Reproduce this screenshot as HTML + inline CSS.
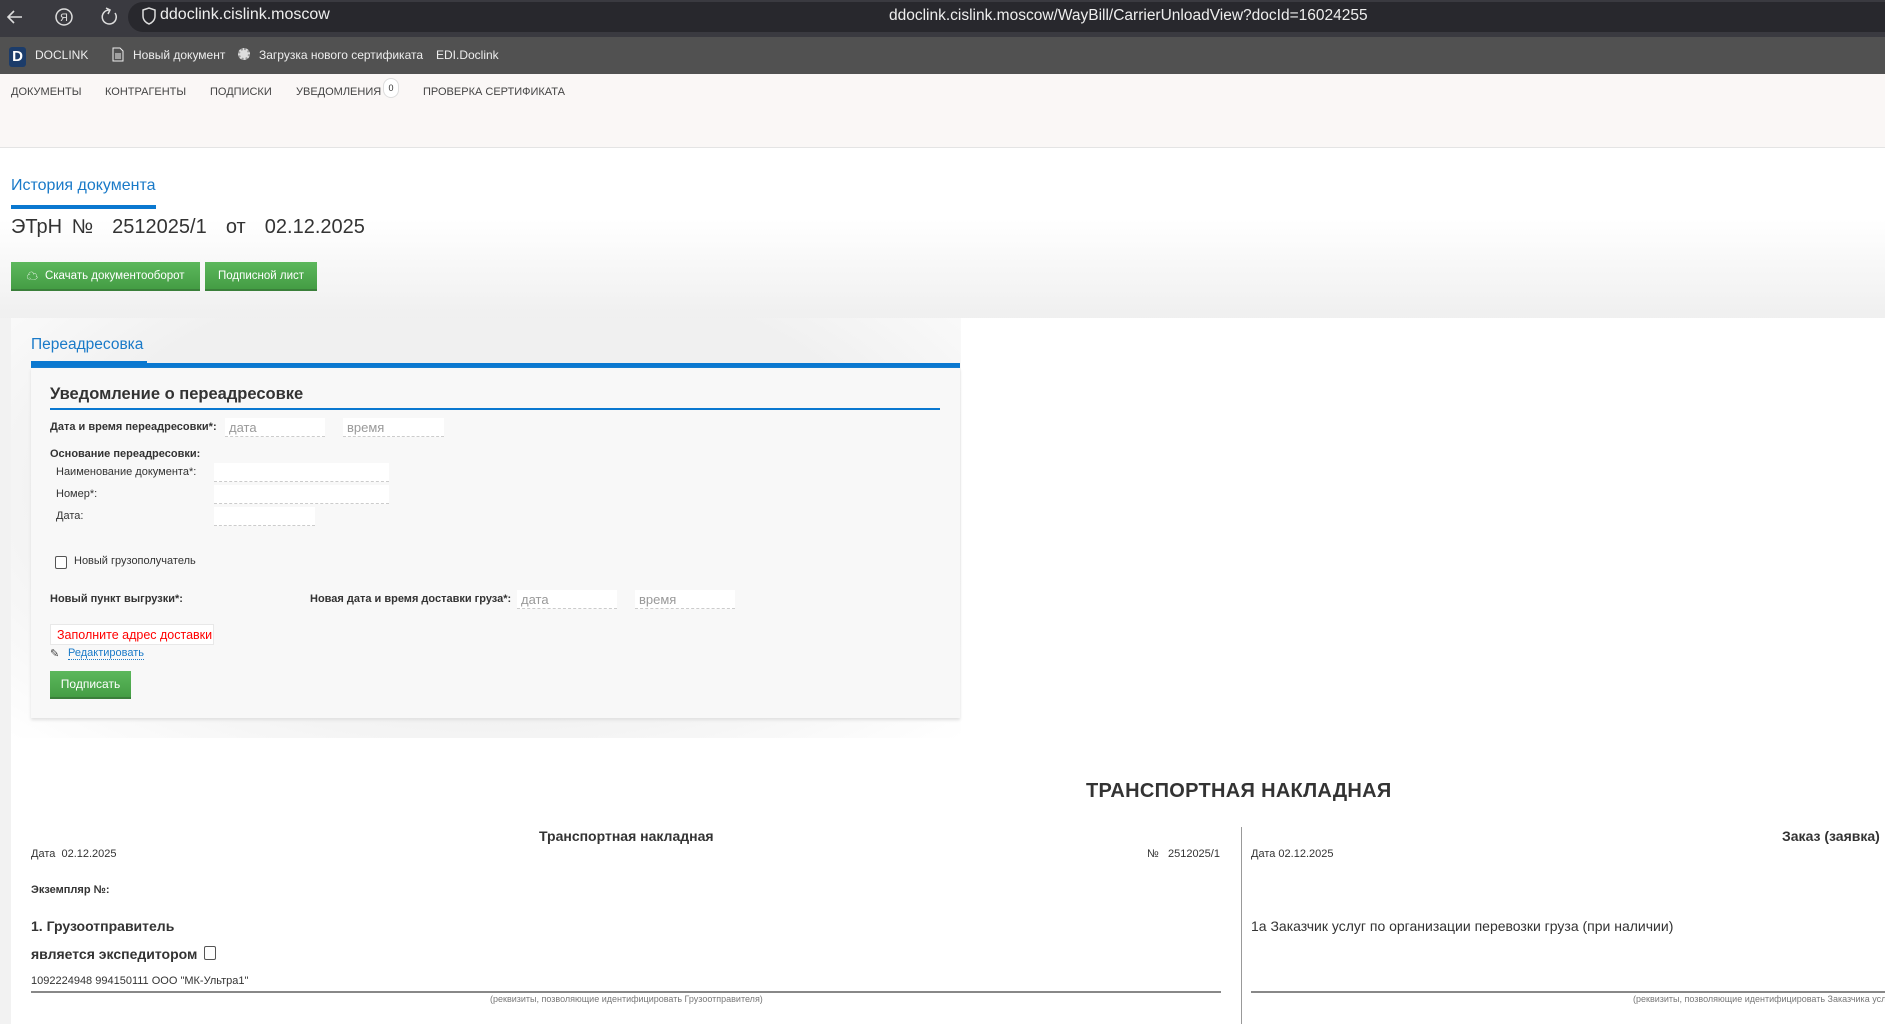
<!DOCTYPE html>
<html><head><meta charset="utf-8"><style>
*{margin:0;padding:0;box-sizing:border-box}
body{width:1885px;height:1024px;overflow:hidden;background:#fff;font-family:"Liberation Sans","Noto Sans CJK SC",sans-serif;color:#333;position:relative}
.a{position:absolute;white-space:nowrap}
.inp{position:absolute;background:#fff;border-bottom:1px dashed #ccc;color:#999;font-size:13px;padding:2px 4px}
.btn{position:absolute;background:linear-gradient(#5cb85c,#449d44);border-bottom:2px solid #3a7f3a;color:#fff;font-size:12px;display:flex;align-items:center;justify-content:center}
.lbl{font-size:11px;color:#333}
</style></head><body>
<div class="a" style="left:0;top:0;width:1885px;height:37px;background:#3a3a40"></div>
<div class="a" style="left:128px;top:2px;width:1757px;height:30px;background:#28282d;border-radius:16px 0 0 16px"></div>
<svg class="a" style="left:6px;top:6px" width="160" height="22" viewBox="0 0 160 22"><path d="M16 11H3M8 5L2 11l6 6" stroke="#ddd" stroke-width="1.6" fill="none"/><circle cx="58" cy="11" r="8" stroke="#ddd" stroke-width="1.5" fill="none"/><text x="54" y="15" fill="#ddd" font-size="11" font-family="Liberation Sans">Я</text><path d="M103 4a7 7 0 1 0 6 3" stroke="#ddd" stroke-width="1.5" fill="none"/><path d="M100 2l4 2-2 4" stroke="#ddd" stroke-width="1.5" fill="none"/><path d="M137 4l6-2 6 2v6c0 4-3 7-6 8-3-1-6-4-6-8z" stroke="#ddd" stroke-width="1.5" fill="none"/></svg>
<div class="a" style="left:160px;top:6px;font-size:16px;color:#eee">ddoclink.cislink.moscow</div>
<div class="a" style="left:889px;top:7px;font-size:15.5px;color:#eee">ddoclink.cislink.moscow/WayBill/CarrierUnloadView?docId=16024255</div>
<div class="a" style="left:0;top:37px;width:1885px;height:37px;background:#515151"></div>
<div class="a" style="left:9px;top:47px;width:17px;height:20px;background:#1c3c6a;border-radius:3px;color:#fff;font-weight:bold;font-size:15px;text-align:center;line-height:20px">D</div>
<div class="a" style="left:35px;top:48px;font-size:12px;color:#eee">DOCLINK</div>
<svg class="a" style="left:112px;top:47px" width="12" height="15"><path d="M1 1h7l3 3v10H1z" stroke="#eee" fill="none"/><path d="M3 7h6M3 9h6M3 11h6" stroke="#eee"/></svg>
<div class="a" style="left:133px;top:48px;font-size:12px;color:#eee">Новый документ</div>
<div class="a" style="left:238px;top:48px;width:12px;height:12px;border-radius:50%;background:#ddd;border:2px dotted #999"></div>
<div class="a" style="left:259px;top:48px;font-size:12px;color:#eee">Загрузка нового сертификата</div>
<div class="a" style="left:436px;top:48px;font-size:12px;color:#eee">EDI.Doclink</div>
<div class="a" style="left:0;top:74px;width:1885px;height:74px;background:#faf7f6;border-bottom:1px solid #e4e4e4"></div>
<div class="a" style="left:11px;top:86px;font-size:11px;color:#444">ДОКУМЕНТЫ</div>
<div class="a" style="left:105px;top:86px;font-size:11px;color:#444">КОНТРАГЕНТЫ</div>
<div class="a" style="left:210px;top:86px;font-size:11px;color:#444">ПОДПИСКИ</div>
<div class="a" style="left:296px;top:86px;font-size:11px;color:#444">УВЕДОМЛЕНИЯ</div>
<div class="a" style="left:383px;top:78px;width:16px;height:20px;border-radius:8px;background:#fff;border:1px solid #ddd;font-size:9px;text-align:center;line-height:18px">0</div>
<div class="a" style="left:423px;top:86px;font-size:11px;color:#444">ПРОВЕРКА СЕРТИФИКАТА</div>
<div class="a" style="left:0;top:220px;width:1885px;height:100px;background:linear-gradient(#fff,#efefef)"></div>
<div class="a" style="left:0;top:318px;width:11px;height:706px;background:#f2f2f2"></div>
<div class="a" style="left:11px;top:318px;width:1874px;height:706px;background:#fff"></div>
<div class="a" style="left:11px;top:318px;width:950px;height:420px;background:radial-gradient(ellipse at 50% 40%,#f0f0f0 60%,#fff 100%)"></div>
<div class="a" style="left:11px;top:177px;font-size:16px;color:#1a7ac8">История документа</div>
<div class="a" style="left:11px;top:205px;width:145px;height:4px;background:#0a78d0"></div>
<div class="a" style="left:11px;top:216px;font-size:20px;color:#333;word-spacing:4px">ЭТрН № &nbsp;2512025/1 &nbsp;от &nbsp;02.12.2025</div>
<div class="btn" style="left:11px;top:262px;width:189px;height:29px;font-size:11.5px"><span style="margin-right:7px">☁</span>Скачать документооборот</div>
<div class="btn" style="left:205px;top:262px;width:112px;height:29px;font-size:11.5px">Подписной лист</div>
<div class="a" style="left:31px;top:336px;font-size:15.5px;color:#1a7ac8">Переадресовка</div>
<div class="a" style="left:31px;top:361px;width:116px;height:3px;background:#0a78d0"></div>
<div class="a" style="left:31px;top:363px;width:929px;height:5px;background:#0a78d0"></div>
<div class="a" style="left:31px;top:368px;width:929px;height:350px;background:#f8f8f8;box-shadow:0 2px 3px #e0e0e0"></div>
<div class="a" style="left:50px;top:385px;font-size:16.5px;font-weight:bold;color:#333">Уведомление о переадресовке</div>
<div class="a" style="left:50px;top:408px;width:890px;height:2px;background:#0a78d0"></div>
<div class="a lbl" style="left:50px;top:421px;font-weight:bold">Дата и время переадресовки*:</div>
<div class="inp" style="left:225px;top:418px;width:100px;height:19px">дата</div>
<div class="inp" style="left:343px;top:418px;width:101px;height:19px">время</div>
<div class="a lbl" style="left:50px;top:448px;font-weight:bold">Основание переадресовки:</div>
<div class="a lbl" style="left:56px;top:466px">Наименование документа*:</div>
<div class="inp" style="left:214px;top:463px;width:175px;height:19px"></div>
<div class="a lbl" style="left:56px;top:488px">Номер*:</div>
<div class="inp" style="left:214px;top:485px;width:175px;height:19px"></div>
<div class="a lbl" style="left:56px;top:510px">Дата:</div>
<div class="inp" style="left:214px;top:507px;width:101px;height:19px"></div>
<div class="a" style="left:55px;top:556px;width:12px;height:13px;border:1px solid #555;border-radius:2px;background:#fff"></div>
<div class="a lbl" style="left:74px;top:555px">Новый грузополучатель</div>
<div class="a lbl" style="left:50px;top:593px;font-weight:bold">Новый пункт выгрузки*:</div>
<div class="a lbl" style="left:310px;top:593px;font-weight:bold">Новая дата и время доставки груза*:</div>
<div class="inp" style="left:517px;top:590px;width:100px;height:19px">дата</div>
<div class="inp" style="left:635px;top:590px;width:100px;height:19px">время</div>
<div class="a" style="left:50px;top:624px;width:164px;height:21px;background:#fff;border:1px solid #e8e8e8;color:#f00;font-size:12.5px;padding:3px 6px">Заполните адрес доставки</div>
<div class="a" style="left:50px;top:647px;font-size:11px;color:#444">✎</div>
<div class="a" style="left:68px;top:647px;font-size:11px;color:#1a7ac8;border-bottom:1px dotted #1a7ac8">Редактировать</div>
<div class="btn" style="left:50px;top:671px;width:81px;height:28px">Подписать</div>
<div class="a" style="left:1086px;top:780px;font-size:20px;font-weight:bold;color:#333;letter-spacing:0.3px">ТРАНСПОРТНАЯ НАКЛАДНАЯ</div>
<div class="a" style="left:1241px;top:827px;width:1px;height:197px;background:#999"></div>
<div class="a" style="left:539px;top:828px;font-size:14px;font-weight:bold">Транспортная накладная</div>
<div class="a" style="left:31px;top:848px;font-size:11px">Дата &nbsp;02.12.2025</div>
<div class="a" style="left:1147px;top:848px;font-size:11px">№ &nbsp;&nbsp;2512025/1</div>
<div class="a" style="left:31px;top:884px;font-size:11px;font-weight:bold">Экземпляр №:</div>
<div class="a" style="left:31px;top:918px;font-size:14px;font-weight:bold">1. Грузоотправитель</div>
<div class="a" style="left:31px;top:946px;font-size:14px;font-weight:bold">является экспедитором</div>
<div class="a" style="left:204px;top:946px;width:12px;height:14px;border:1px solid #555;border-radius:2px"></div>
<div class="a" style="left:31px;top:975px;font-size:11px">1092224948 994150111 ООО "МК-Ультра1"</div>
<div class="a" style="left:31px;top:991px;width:1190px;height:2px;background:#888"></div>
<div class="a" style="left:490px;top:994px;font-size:9px;color:#777">(реквизиты, позволяющие идентифицировать Грузоотправителя)</div>
<div class="a" style="left:1782px;top:828px;font-size:14px;font-weight:bold">Заказ (заявка)</div>
<div class="a" style="left:1251px;top:848px;font-size:11px">Дата 02.12.2025</div>
<div class="a" style="left:1251px;top:918px;font-size:14px">1а Заказчик услуг по организации перевозки груза (при наличии)</div>
<div class="a" style="left:1251px;top:991px;width:634px;height:2px;background:#888"></div>
<div class="a" style="left:1633px;top:994px;font-size:9px;color:#777">(реквизиты, позволяющие идентифицировать Заказчика услуг</div>
</body></html>
